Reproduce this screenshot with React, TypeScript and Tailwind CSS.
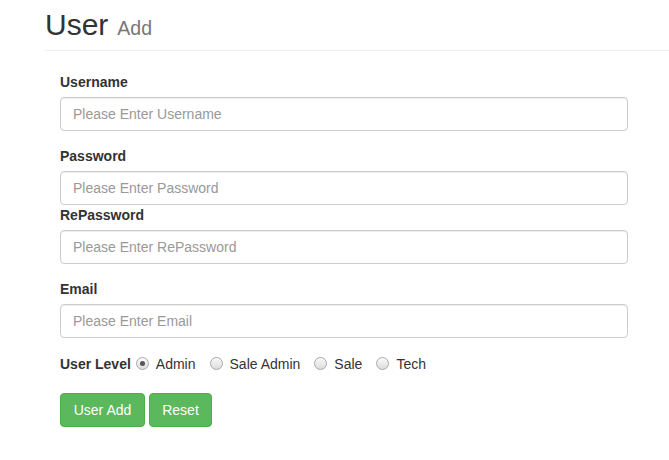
import { useState } from 'react';

type Level = 'Admin' | 'Sale Admin' | 'Sale' | 'Tech';

const levels: Level[] = ['Admin', 'Sale Admin', 'Sale', 'Tech'];

const inputClass =
  'block w-full h-[34px] px-3 py-1.5 text-sm text-[#555] bg-white border border-[#ccc] rounded-[4px] shadow-[inset_0_1px_1px_rgba(0,0,0,0.075)] placeholder:text-[#999] outline-none';

function Field({ label, placeholder, type = 'text', tight = false }: { label: string; placeholder: string; type?: string; tight?: boolean }) {
  return (
    <div className={tight ? 'mb-0' : 'mb-[15px]'}>
      <label className="block mb-[5px] text-sm leading-5 font-bold text-[#333]">{label}</label>
      <input type={type} placeholder={placeholder} className={inputClass} />
    </div>
  );
}

function Radio({ checked }: { checked: boolean }) {
  return (
    <span className="flex items-center justify-center w-[13px] h-[13px] rounded-full border border-[#a9a9a9] bg-gradient-to-b from-[#fafafa] to-[#dcdcdc]">
      {checked && <span className="w-[5px] h-[5px] rounded-full bg-[#555]" />}
    </span>
  );
}

export default function App() {
  const [level, setLevel] = useState<Level>('Admin');

  return (
    <div className="min-h-[460px] bg-white pl-[45px] font-['Liberation_Sans',Arial,sans-serif] text-[#333]">
      <div className="pt-[8px] pb-[9px] border-b border-[#eee]">
        <h1 className="flex items-baseline h-[33px] text-[30px] leading-[33px] font-normal">
          User
          <small className="ml-[9px] text-[19.5px] leading-none text-[#777]">Add</small>
        </h1>
      </div>

      <form className="w-[568px] ml-[15px] mt-[21px]" onSubmit={(e) => e.preventDefault()}>
        <Field label="Username" placeholder="Please Enter Username" />
        <Field label="Password" placeholder="Please Enter Password" type="password" tight />
        <Field label="RePassword" placeholder="Please Enter RePassword" type="password" />
        <Field label="Email" placeholder="Please Enter Email" />

        <div className="flex items-center h-5 mt-[1px] pt-[1px] text-sm leading-5">
          <span className="font-bold">User Level</span>
          <div className="flex items-center ml-[5px] gap-[14px]">
            {levels.map((l) => (
              <label key={l} className="flex items-center gap-[7px] cursor-pointer" onClick={() => setLevel(l)}>
                <Radio checked={level === l} />
                <span>{l}</span>
              </label>
            ))}
          </div>
        </div>

        <div className="flex gap-1 mt-[20px]">
          <button type="submit" className="w-[85px] h-[34px] text-sm text-white bg-[#5cb85c] border border-[#4cae4c] rounded-[4px]">
            User Add
          </button>
          <button type="reset" className="w-[63px] h-[34px] text-sm text-white bg-[#5cb85c] border border-[#4cae4c] rounded-[4px]">
            Reset
          </button>
        </div>
      </form>
    </div>
  );
}
